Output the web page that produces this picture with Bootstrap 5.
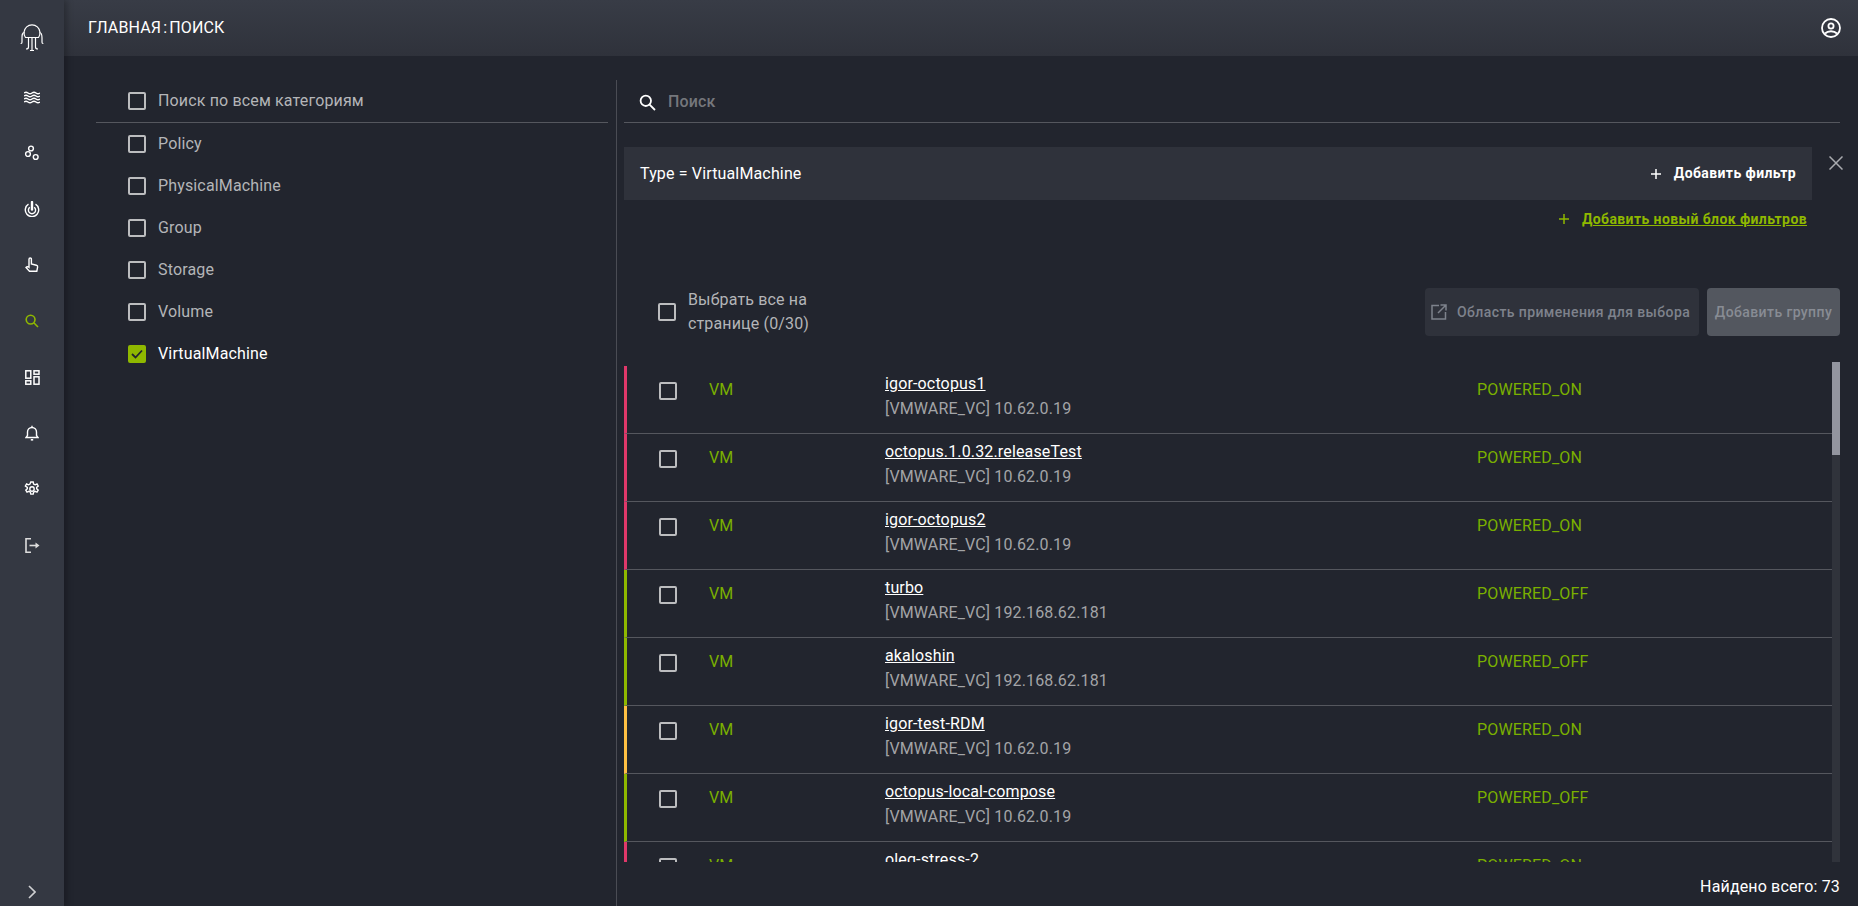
<!DOCTYPE html>
<html lang="en">
<head>
  <meta charset="UTF-8" />
  <title>Поиск</title>
  <link rel="stylesheet" href="https://cdn.jsdelivr.net/npm/bootstrap@5.3.0/dist/css/bootstrap.min.css" />
  <style>
  html, body { height: 100%; }
  body {
    background-color: #22252e;
    color: #b4b5b8;
    font-family: Roboto, "Liberation Sans", sans-serif;
    font-size: 16px;
    letter-spacing: .15px;
    overflow: hidden;
  }
  .app-shell { height: 906px; }
  .side-rail {
    width: 64px;
    flex: none;
    background-color: #343842;
    box-shadow: 3px 0 6px rgba(0,0,0,.25);
    z-index: 2;
    padding-top: 17px;
  }
  .rail-item { height: 56px; }
  .rail-logo { height: 40px; margin-bottom: 12px; }
  .rail-toggle { height: 28px; margin-top: auto; }
  .top-bar {
    height: 56px;
    flex: none;
    background: linear-gradient(180deg, #383c46, #2f323b);
    padding: 0 17px 0 24px;
    color: #fff;
  }
  .crumb-sep { margin: 0 2px; }
  .work-area { min-height: 0; padding: 24px 18px 0 32px; }
  .cat-panel { width: 521px; flex: none; border-right: 1px solid #4a4c54; }
  .cat-all { height: 43px; margin-right: 8px; border-bottom: 1px solid #55575e; padding-left: 32px; }
  .cat-row { height: 42px; padding-left: 32px; }
  .cat-row.is-on { color: #fff; }
  .fake-check {
    width: 18px; height: 18px; flex: none;
    border: 2px solid #bcbdbf; border-radius: 2px;
    margin-right: 12px;
  }
  .fake-check.is-on { background-color: #8fb800; border-color: #8fb800; }
  .result-panel { min-width: 0; padding-left: 7px; }
  .search-row { height: 43px; flex: none; border-bottom: 1px solid #55575e; padding: 2px 0 0 15px; color: #75777c; font-weight: 500; }
  .search-row svg { margin-right: 12px; }
  .filter-wrap { margin-top: 24px; }
  .filter-box { height: 53px; width: 1188px; flex: none; background-color: #2f323b; padding: 0 16px; color: #fff; }
  .add-filter { font-size: 14px; font-weight: 700; letter-spacing: .4px; }
  .close-x { flex: none; margin: 9px -3px 0 17px; }
  .add-block { margin: 9px 33px 0 0; font-size: 14px; font-weight: 700; letter-spacing: .4px; height: 20px; flex: none; }
  .add-block a { color: #8fb800; }
  .select-bar { margin-top: 59px; height: 48px; flex: none; padding-left: 34px; }
  .select-label { line-height: 24px; width: 140px; }
  .scope-btn, .group-btn {
    height: 48px; border: 0; border-radius: 4px;
    font-size: 14px; font-weight: 500; letter-spacing: .4px;
    padding: 0;
  }
  .scope-btn { width: 274px; padding-left: 6px; background-color: #2f323b; color: #7e828c; margin-right: 8px; }
  .scope-btn svg { margin-right: 10px; }
  .group-btn { width: 133px; background-color: #53575f; color: #888c94; }
  .vm-list { margin-top: 26px; height: 500px; flex: none; padding-top: 4px; position: relative; overflow: hidden; }
  .vm-row {
    height: 68px; display: flex; margin-right: 8px;
    border-left: 3px solid #8fb800;
    border-bottom: 1px solid #55575e;
    padding-left: 32px; padding-top: 16px;
  }
  .vm-row.is-crit { border-left-color: #e0386a; }
  .vm-row.is-warn { border-left-color: #ffc043; }
  .vm-row .fake-check { margin: 0; }
  .vm-kind { width: 208px; padding-left: 32px; margin-top: -2px; color: #7ab000; line-height: 20px; flex: none; }
  .vm-info { width: 592px; flex: none; margin-top: -8px; line-height: 20px; color: #a3a4a7; }
  .vm-info a { color: #fff; display: block; margin-bottom: 5px; }
  .vm-state { color: #7ab000; line-height: 20px; margin-top: -2px; }
  .list-scroll { position: absolute; right: 0; top: 0; bottom: 0; width: 8px; background-color: #30333b; }
  .list-thumb { height: 93px; background-color: #93959f; }
  .found-total { height: 44px; flex: none; color: #fff; padding-top: 6px; }
  </style>
</head>
<body>
  <div class="app-shell d-flex">
    <nav class="side-rail d-flex flex-column align-items-center">
      <div class="rail-logo d-flex align-items-center justify-content-center">
        <svg width="24" height="30" viewBox="0 0 24 30" fill="none" stroke="#fff" stroke-width="1.2"><path d="M5.500 15.500A8 8 0 1 1 18.500 15.500Z"/><path d="M4.500 10.500C2 10.500 2 13 2 16V20C2 21.500 1 21.500 .8 21M19.500 10.500C22 10.500 22 13 22 16V20C22 21.500 23 21.500 23.200 21"/><path d="M8.500 15.500V25C8.500 27 7 27 6 27M15.500 15.500V25C15.500 27 17 27 18 27M12 15.500V28.500M10 28.500H14"/></svg>
      </div>
      <div class="rail-item d-flex align-items-center justify-content-center">
        <svg width="16" height="13" viewBox="0 0 16 13" fill="none" stroke="#fff" stroke-width="1.400"><path d="M0 2q2-1.500 4 0t4 0 4 0 4 0M0 5q2-1.500 4 0t4 0 4 0 4 0M0 8q2-1.500 4 0t4 0 4 0 4 0M0 11q2-1.500 4 0t4 0 4 0 4 0"/></svg>
      </div>
      <div class="rail-item d-flex align-items-center justify-content-center">
        <svg width="16" height="16" viewBox="0 0 16 16" fill="none" stroke="#fff" stroke-width="1.400"><circle cx="7" cy="3.500" r="2.400"/><circle cx="4" cy="9" r="2.400"/><circle cx="11.700" cy="12" r="2.400"/></svg>
      </div>
      <div class="rail-item d-flex align-items-center justify-content-center">
        <svg width="16" height="16" viewBox="0 0 16 16" fill="none" stroke="#fff" stroke-width="1.400"><path d="M4.500 3.200A6.700 6.700 0 1 0 11.500 3.200"/><path d="M5.800 6.300A3.600 3.600 0 1 0 10.200 6.300"/><path d="M8 1V8.500" stroke-width="2.400" stroke-linecap="round"/></svg>
      </div>
      <div class="rail-item d-flex align-items-center justify-content-center">
        <svg width="14" height="16" viewBox="0 0 14 16" fill="none" stroke="#fff" stroke-width="1.400"><path d="M4 9V2.200a1.200 1.200 0 0 1 2.400 0V7l5 1.200c1 .3 1.400 1 1.200 2l-.8 4H4.500L1 10.500c.8-1 2-1 3-.2z"/></svg>
      </div>
      <div class="rail-item d-flex align-items-center justify-content-center">
        <svg width="14" height="14" viewBox="0 0 14 14" fill="none" stroke="#8fb800" stroke-width="1.600"><circle cx="5.600" cy="5.600" r="4.400"/><path d="M8.800 8.800L13 13"/></svg>
      </div>
      <div class="rail-item d-flex align-items-center justify-content-center">
        <svg width="15" height="15" viewBox="0 0 15 15" fill="none" stroke="#fff" stroke-width="1.500"><rect x=".8" y=".8" width="5" height="7.400"/><rect x="9" y=".8" width="5" height="3.400"/><rect x=".8" y="10.800" width="5" height="3.400"/><rect x="9" y="6.800" width="5" height="7.400"/></svg>
      </div>
      <div class="rail-item d-flex align-items-center justify-content-center">
        <svg width="14" height="16" viewBox="0 0 14 16" fill="none" stroke="#fff" stroke-width="1.400"><path d="M1 12.500h12l-1.500-2V7A4.500 4.500 0 0 0 2.500 7v3.500zM7 .8v1.800"/><path d="M5.800 14.800h2.400" stroke-width="1.600"/></svg>
      </div>
      <div class="rail-item d-flex align-items-center justify-content-center">
        <svg width="16" height="16" viewBox="0 0 16 16" fill="none" stroke="#fff" stroke-width="1.400"><circle cx="8" cy="8" r="2.200"/><path d="M6.800 1h2.400l.4 2 1.500.8 1.900-.8 1.200 2-1.500 1.300v1.500l1.500 1.300-1.200 2-1.900-.8-1.500.8-.4 2H6.800l-.4-2-1.500-.8-1.900.8-1.200-2 1.500-1.300V6.300L1.400 5l1.200-2 1.900.8 1.500-.8z"/></svg>
      </div>
      <div class="rail-item d-flex align-items-center justify-content-center">
        <svg width="15" height="15" viewBox="0 0 15 15" fill="none" stroke="#ddd" stroke-width="1.600"><path d="M6 .8H1v13.400h5"/><path d="M4.500 7.500H12"/><path d="M10.500 4.500l4 3-4 3z" fill="#ddd" stroke="none"/></svg>
      </div>
      <div class="rail-toggle d-flex align-items-center justify-content-center">
        <svg width="8" height="14" viewBox="0 0 8 14" fill="none" stroke="#cfd0d2" stroke-width="1.600"><path d="M1 1l6 6-6 6"/></svg>
      </div>
    </nav>

    <div class="flex-grow-1 d-flex flex-column" style="min-width:0">
      <header class="top-bar d-flex align-items-center justify-content-between">
        <div>ГЛАВНАЯ<span class="crumb-sep">:</span>ПОИСК</div>
        <svg width="20" height="20" viewBox="0 0 20 20" fill="none" stroke="#fff" stroke-width="1.800"><circle cx="10" cy="10" r="9"/><circle cx="10" cy="8" r="2.600"/><path d="M4 15.500c3-3 9-3 12 0"/></svg>
      </header>

      <main class="work-area d-flex flex-grow-1">
        <section class="cat-panel">
          <div class="cat-all d-flex align-items-center"><span class="fake-check"></span>Поиск по всем категориям</div>
          <div class="cat-row d-flex align-items-center"><span class="fake-check"></span>Policy</div>
          <div class="cat-row d-flex align-items-center"><span class="fake-check"></span>PhysicalMachine</div>
          <div class="cat-row d-flex align-items-center"><span class="fake-check"></span>Group</div>
          <div class="cat-row d-flex align-items-center"><span class="fake-check"></span>Storage</div>
          <div class="cat-row d-flex align-items-center"><span class="fake-check"></span>Volume</div>
          <div class="cat-row is-on d-flex align-items-center">
            <span class="fake-check is-on d-flex align-items-center justify-content-center">
              <svg width="12" height="10" viewBox="0 0 12 10" fill="none" stroke="#22252e" stroke-width="1.800"><path d="M1 5l3.500 3.500L11 1.500"/></svg>
            </span>VirtualMachine
          </div>
        </section>

        <section class="result-panel flex-grow-1 d-flex flex-column">
          <div class="search-row d-flex align-items-center">
            <svg width="17" height="17" viewBox="0 0 17 17" fill="none" stroke="#fff" stroke-width="1.800"><circle cx="6.800" cy="6.800" r="5.200"/><path d="M10.600 10.600L16 16"/></svg>
            <span>Поиск</span>
          </div>

          <div class="filter-wrap d-flex align-items-start">
            <div class="filter-box d-flex align-items-center justify-content-between">
              <span>Type = VirtualMachine</span>
              <span class="add-filter d-flex align-items-center">
                <svg class="me-2" width="12" height="12" viewBox="0 0 12 12" fill="none" stroke="#fff" stroke-width="1.500"><path d="M6 1V11M1 6H11"/></svg>
                <span class="ms-1">Добавить фильтр</span>
              </span>
            </div>
            <svg class="close-x" width="14" height="14" viewBox="0 0 14 14" fill="none" stroke="#a9abaf" stroke-width="1.500"><path d="M.5 .5L13.500 13.500M13.500 .5L.5 13.500"/></svg>
          </div>

          <div class="add-block d-flex align-items-center justify-content-end">
            <svg class="me-2" width="12" height="12" viewBox="0 0 12 12" fill="none" stroke="#8fb800" stroke-width="1.500"><path d="M6 1V11M1 6H11"/></svg>
            <a class="ms-1" href="#">Добавить новый блок фильтров</a>
          </div>

          <div class="select-bar d-flex align-items-center">
            <span class="fake-check"></span>
            <div class="select-label">Выбрать все на странице (0/30)</div>
            <div class="ms-auto d-flex">
              <button class="scope-btn d-flex align-items-center" type="button">
                <svg width="16" height="16" viewBox="0 0 16 16" fill="none" stroke="#7e828c" stroke-width="1.500"><path d="M8 1.500H1v13.500h13.500V8M9.500 1H15v5.500M15 1L7 9"/></svg>
                Область применения для выбора
              </button>
              <button class="group-btn" type="button">Добавить группу</button>
            </div>
          </div>

          <div class="vm-list" id="vmList"></div>
          <div class="found-total d-flex align-items-center justify-content-end">Найдено всего: 73</div>
        </section>
      </main>
    </div>
  </div>

  <script src="https://cdn.jsdelivr.net/npm/bootstrap@5.3.0/dist/js/bootstrap.bundle.min.js"></script>
  <script>
    const vms = [
      ["igor-octopus1", "10.62.0.19", "POWERED_ON", "is-crit"],
      ["octopus.1.0.32.releaseTest", "10.62.0.19", "POWERED_ON", "is-crit"],
      ["igor-octopus2", "10.62.0.19", "POWERED_ON", "is-crit"],
      ["turbo", "192.168.62.181", "POWERED_OFF", ""],
      ["akaloshin", "192.168.62.181", "POWERED_OFF", ""],
      ["igor-test-RDM", "10.62.0.19", "POWERED_ON", "is-warn"],
      ["octopus-local-compose", "10.62.0.19", "POWERED_OFF", ""],
      ["oleg-stress-2", "10.62.0.19", "POWERED_ON", "is-crit"]
    ];
    document.getElementById("vmList").innerHTML = vms.map(v => `
      <div class="vm-row ${v[3]}">
        <span class="fake-check"></span>
        <div class="vm-kind">VM</div>
        <div class="vm-info"><a href="#">${v[0]}</a>[VMWARE_VC] ${v[1]}</div>
        <div class="vm-state">${v[2]}</div>
      </div>`).join("") + '<div class="list-scroll"><div class="list-thumb"></div></div>';
  </script>
</body>
</html>
